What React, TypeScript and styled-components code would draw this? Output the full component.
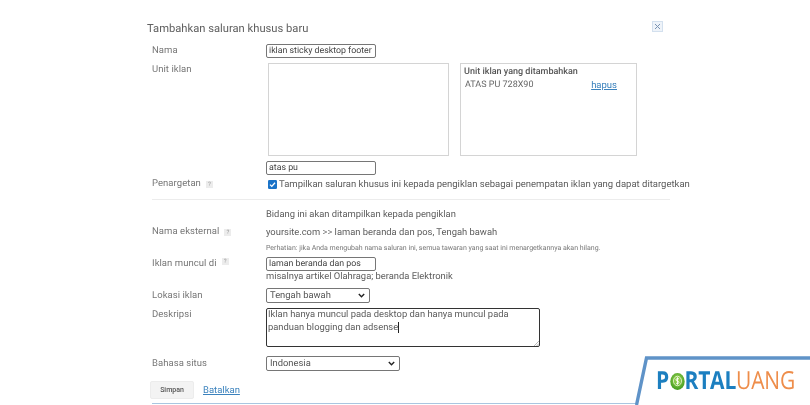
import React from "react";
import styled, { createGlobalStyle } from "styled-components";

const Global = createGlobalStyle`
  html, body { margin: 0; padding: 0; background: #fff; }
  body { width: 810px; height: 405px; overflow: hidden; font-family: Roboto, "Liberation Sans", sans-serif; text-rendering: geometricPrecision; }
  * { box-sizing: border-box; }
`;

const Page = styled.div`
  position: relative;
  width: 810px;
  height: 405px;
  overflow: hidden;
  background: #fff;
  color: #555;
  font-size: 9.5px;
  padding: 21px 0 0 147px;
  filter: blur(0.35px);
`;

const Header = styled.div`
  display: flex;
  justify-content: space-between;
  align-items: center;
  width: 516px;
  height: 15px;
`;

const Title = styled.h1`
  margin: 0;
  font-size: 11.2px;
  font-weight: 400;
  color: #606060;
`;

const CloseBox = styled.svg`
  width: 11px;
  height: 11px;
  margin-top: -4px;
`;

const Form = styled.div`
  padding-left: 5px;
  margin-top: 8px;
  width: 523px;
`;

const Row = styled.div<{ $h: number; $mt?: number }>`
  display: grid;
  grid-template-columns: 114px 1fr;
  height: ${(p) => p.$h}px;
  margin-top: ${(p) => p.$mt ?? 0}px;
`;

const Label = styled.div<{ $center?: boolean }>`
  display: flex;
  align-items: ${(p) => (p.$center ? "center" : "flex-start")};
  gap: 5px;
  color: #777;
  line-height: 12px;
  letter-spacing: 0.05px;
  padding-top: ${(p) => (p.$center ? 0 : 1)}px;
`;

const Help = styled.span`
  display: inline-flex;
  align-items: center;
  justify-content: center;
  width: 7px;
  height: 7px;
  background: #ececec;
  color: #999;
  font-size: 6px;
  line-height: 7px;
`;

const TextInput = styled.div`
  width: 110px;
  height: 14px;
  border: 1px solid #767676;
  border-radius: 2px;
  padding-left: 2px;
  font-size: 8.8px;
  line-height: 12px;
  color: #444;
  background: #fff;
`;

const Boxes = styled.div`
  display: flex;
  padding-left: 2px;
  gap: 11px;
`;

const ListBox = styled.div<{ $w: number }>`
  width: ${(p) => p.$w}px;
  height: 93px;
  border: 1px solid #d4d4d4;
  padding: 3px;
`;

const BoxTitle = styled.div`
  font-weight: 500;
  font-size: 9px;
  line-height: 11px;
  color: #555;
`;

const BoxItem = styled.div`
  display: flex;
  justify-content: space-between;
  padding: 2px 16px 0 1px;
  font-size: 9px;
  line-height: 11px;
  color: #666;
`;

const LinkText = styled.a`
  color: #3b82bd;
  text-decoration: underline;
  font-size: 9.5px;
`;

const Check = styled.label`
  display: flex;
  align-items: center;
  gap: 2px;
  padding-left: 2px;
  font-size: 9.5px;
  color: #5c5c5c;
  white-space: nowrap;
`;

const CheckMark = styled.svg`
  width: 9px;
  height: 9px;
`;

const Divider = styled.hr`
  border: 0;
  height: 1px;
  background: #ececec;
  margin: 9px 0 0;
  width: 518px;
`;

const Plain = styled.div`
  display: flex;
  align-items: center;
  font-size: 9.4px;
  color: #5c5c5c;
  white-space: nowrap;
`;

const Small = styled(Plain)`
  font-size: 7px;
  color: #777;
`;

const Hint = styled.div`
  font-size: 9.4px;
  line-height: 12px;
  color: #5c5c5c;
`;

const Select = styled.div<{ $w: number }>`
  display: flex;
  align-items: center;
  justify-content: space-between;
  width: ${(p) => p.$w}px;
  height: 15px;
  border: 1px solid #767676;
  border-radius: 2px;
  padding: 0 4px 0 3px;
  font-size: 9.4px;
  color: #555;
`;

const Chevron = styled.svg`
  width: 7px;
  height: 5px;
`;

const TextArea = styled.div`
  position: relative;
  width: 274px;
  height: 39px;
  border: 1.5px solid #333;
  border-radius: 2px;
  padding: 0 1px;
  font-size: 9.4px;
  line-height: 12.5px;
  color: #5c5c5c;
`;

const Caret = styled.span`
  border-right: 1px solid #222;
`;

const Grip = styled.svg`
  position: absolute;
  right: 0;
  bottom: 0;
  width: 6px;
  height: 6px;
`;

const Actions = styled.div`
  display: flex;
  align-items: center;
  gap: 9px;
  margin: 10px 0 0 -2px;
`;

const SaveButton = styled.button`
  width: 44px;
  height: 18px;
  border: 1px solid #ececec;
  border-radius: 2px;
  background: #f3f3f3;
  font-family: inherit;
  font-size: 7px;
  font-weight: 500;
  color: #555;
  padding: 0;
`;

const BottomRule = styled.div`
  height: 1px;
  width: 490px;
  background: #a9c6e0;
  margin: 4px 0 0 0;
`;

const Brand = styled.div`
  position: absolute;
  right: 0;
  bottom: 0;
  width: 175px;
  height: 49px;
`;

const BrandFrame = styled.svg`
  position: absolute;
  inset: 0;
  width: 100%;
  height: 100%;
`;

const BrandName = styled.div`
  position: absolute;
  left: 21px;
  top: 15px;
  display: flex;
  align-items: center;
  font-family: "Open Sans", "Liberation Sans", sans-serif;
  font-size: 21px;
  line-height: 20px;
  white-space: nowrap;
  transform: scaleY(1.18);
  letter-spacing: -0.2px;
`;

const BrandBlue = styled.span`
  color: #1c7fc0;
  font-weight: 700;
`;

const BrandOrange = styled.span`
  color: #ee8d4a;
  font-weight: 400;
`;

const Coin = styled.svg`
  width: 15px;
  height: 15px;
  margin: 0 0 0 0.5px;
`;

export default function App() {
  return (
    <Page>
      <Global />
      <Header>
        <Title>Tambahkan saluran khusus baru</Title>
        <CloseBox viewBox="0 0 11 11">
          <rect x="0.5" y="0.5" width="10" height="10" fill="#eef3f9" stroke="#d3e0ee" />
          <path d="M3 3l5 5M8 3l-5 5" stroke="#7b94b3" strokeWidth="1" />
        </CloseBox>
      </Header>
      <Form>
        <Row $h={14}>
          <Label $center>Nama</Label>
          <TextInput>iklan sticky desktop footer</TextInput>
        </Row>
        <Row $h={93} $mt={5}>
          <Label>Unit iklan</Label>
          <Boxes>
            <ListBox $w={181} />
            <ListBox $w={177}>
              <BoxTitle>Unit iklan yang ditambahkan</BoxTitle>
              <BoxItem>
                <span>ATAS PU 728X90</span>
                <LinkText>hapus</LinkText>
              </BoxItem>
            </ListBox>
          </Boxes>
        </Row>
        <Row $h={14} $mt={5}>
          <span />
          <TextInput>atas pu</TextInput>
        </Row>
        <Row $h={12} $mt={3}>
          <Label $center>
            Penargetan <Help>?</Help>
          </Label>
          <Check>
            <CheckMark viewBox="0 0 9 9">
              <rect width="9" height="9" rx="1.2" fill="#1a73c8" />
              <path d="M2 4.6l1.8 1.8L7 2.8" fill="none" stroke="#fff" strokeWidth="1.3" />
            </CheckMark>
            Tampilkan saluran khusus ini kepada pengiklan sebagai penempatan iklan yang dapat ditargetkan
          </Check>
        </Row>
        <Divider />
        <Row $h={12} $mt={8}>
          <span />
          <Plain>Bidang ini akan ditampilkan kepada pengiklan</Plain>
        </Row>
        <Row $h={12} $mt={6}>
          <Label $center>
            Nama eksternal <Help>?</Help>
          </Label>
          <Plain>yoursite.com &gt;&gt; laman beranda dan pos, Tengah bawah</Plain>
        </Row>
        <Row $h={8} $mt={6}>
          <span />
          <Small>Perhatian: jika Anda mengubah nama saluran ini, semua tawaran yang saat ini menargetkannya akan hilang.</Small>
        </Row>
        <Row $h={26} $mt={5}>
          <Label>
            Iklan muncul di <Help>?</Help>
          </Label>
          <div>
            <TextInput>laman beranda dan pos</TextInput>
            <Hint>misalnya artikel Olahraga; beranda Elektronik</Hint>
          </div>
        </Row>
        <Row $h={15} $mt={5}>
          <Label $center>Lokasi iklan</Label>
          <Select $w={104}>
            Tengah bawah
            <Chevron viewBox="0 0 7 5">
              <path d="M.8 1l2.7 2.7L6.2 1" fill="none" stroke="#222" strokeWidth="1.4" />
            </Chevron>
          </Select>
        </Row>
        <Row $h={39} $mt={5}>
          <Label>Deskripsi</Label>
          <TextArea>
            Iklan hanya muncul pada desktop dan hanya muncul pada panduan blogging dan <Caret>adsense</Caret>
            <Grip viewBox="0 0 6 6">
              <path d="M1 6l5-5M3.5 6L6 3.5" stroke="#999" strokeWidth="0.7" />
            </Grip>
          </TextArea>
        </Row>
        <Row $h={15} $mt={9}>
          <Label $center>Bahasa situs</Label>
          <Select $w={134}>
            Indonesia
            <Chevron viewBox="0 0 7 5">
              <path d="M.8 1l2.7 2.7L6.2 1" fill="none" stroke="#222" strokeWidth="1.4" />
            </Chevron>
          </Select>
        </Row>
        <Actions>
          <SaveButton>Simpan</SaveButton>
          <LinkText>Batalkan</LinkText>
        </Actions>
        <BottomRule />
      </Form>
      <Brand>
        <BrandFrame viewBox="0 0 175 49">
          <path d="M0 49L10 2H175V49Z" fill="#fff" />
          <path d="M1.5 49L11.5 2H175" fill="none" stroke="#5f93c8" strokeWidth="3.4" />
        </BrandFrame>
        <BrandName>
          <BrandBlue>P</BrandBlue>
          <Coin viewBox="0 0 15 15" role="img">
            <defs>
              <radialGradient id="coin" cx="50%" cy="40%" r="60%">
                <stop offset="0%" stopColor="#a6dc5a" />
                <stop offset="100%" stopColor="#3f9a1f" />
              </radialGradient>
            </defs>
            <circle cx="7.5" cy="7.5" r="7.2" fill="url(#coin)" />
            <circle cx="7.5" cy="7" r="4" fill="none" stroke="#e8f6d0" strokeWidth="0.8" />
            <path d="M9 5.3C8 4.6 6 4.8 6 6c0 1.4 3 .8 3 2.2 0 1.2-2 1.3-3 .6M7.5 3.8v6.4" fill="none" stroke="#fff" strokeWidth="0.8" />
          </Coin>
          <BrandBlue>RTAL</BrandBlue>
          <BrandOrange>UANG</BrandOrange>
        </BrandName>
      </Brand>
    </Page>
  );
}
